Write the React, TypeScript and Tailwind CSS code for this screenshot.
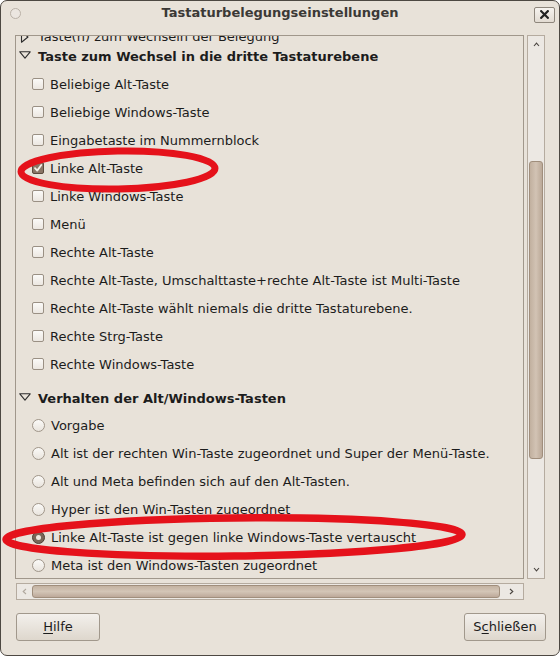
import React from 'react';

type Row =
  | { kind: 'check'; label: string; checked?: boolean }
  | { kind: 'radio'; label: string; checked?: boolean };

const thirdLevel: Row[] = [
  { kind: 'check', label: 'Beliebige Alt-Taste' },
  { kind: 'check', label: 'Beliebige Windows-Taste' },
  { kind: 'check', label: 'Eingabetaste im Nummernblock' },
  { kind: 'check', label: 'Linke Alt-Taste', checked: true },
  { kind: 'check', label: 'Linke Windows-Taste' },
  { kind: 'check', label: 'Menü' },
  { kind: 'check', label: 'Rechte Alt-Taste' },
  { kind: 'check', label: 'Rechte Alt-Taste, Umschalttaste+rechte Alt-Taste ist Multi-Taste' },
  { kind: 'check', label: 'Rechte Alt-Taste wählt niemals die dritte Tastaturebene.' },
  { kind: 'check', label: 'Rechte Strg-Taste' },
  { kind: 'check', label: 'Rechte Windows-Taste' },
];

const altWin: Row[] = [
  { kind: 'radio', label: 'Vorgabe' },
  { kind: 'radio', label: 'Alt ist der rechten Win-Taste zugeordnet und Super der Menü-Taste.' },
  { kind: 'radio', label: 'Alt und Meta befinden sich auf den Alt-Tasten.' },
  { kind: 'radio', label: 'Hyper ist den Win-Tasten zugeordnet' },
  { kind: 'radio', label: 'Linke Alt-Taste ist gegen linke Windows-Taste vertauscht', checked: true },
  { kind: 'radio', label: 'Meta ist den Windows-Tasten zugeordnet' },
];

function Expander({ open }: { open: boolean }) {
  return open ? (
    <svg width="12" height="8" viewBox="0 0 12 8" className="shrink-0 -mt-[3px]">
      <path d="M0.8 0.8 H11.2 L6 7.2 Z" fill="none" stroke="#2e2e2e" strokeWidth="1.1" strokeLinejoin="round" />
    </svg>
  ) : (
    <svg width="12" height="12" viewBox="0 0 12 12" className="shrink-0">
      <path d="M2.5 0.8 V11.2 L9 6 Z" fill="none" stroke="#2e2e2e" strokeWidth="1.1" strokeLinejoin="round" />
    </svg>
  );
}

function CheckBox({ checked }: { checked?: boolean }) {
  return checked ? (
    <span className="w-[12px] h-[12px] rounded-[2px] border border-[#5a4a3e] bg-[#8a7566] flex items-center justify-center shrink-0">
      <svg width="10" height="10" viewBox="0 0 10 10">
        <path d="M2 5.2 L4.2 7.6 L8.3 2" fill="none" stroke="#f4efe9" strokeWidth="1.8" strokeLinecap="round" strokeLinejoin="round" />
      </svg>
    </span>
  ) : (
    <span className="w-[12px] h-[12px] rounded-[2px] border border-[#9a9084] bg-gradient-to-b from-[#fbfaf8] to-[#ece7e1] shrink-0" />
  );
}

function RadioDot({ checked }: { checked?: boolean }) {
  return checked ? (
    <span className="w-[13px] h-[13px] rounded-full border border-[#4e4036] bg-[#7a6658] flex items-center justify-center shrink-0">
      <span className="w-[5px] h-[5px] rounded-full bg-[#efe8e0]" />
    </span>
  ) : (
    <span className="w-[13px] h-[13px] rounded-full border border-[#a0968a] bg-gradient-to-b from-[#fbfaf8] to-[#e9e4dd] shrink-0" />
  );
}

function Item({ row }: { row: Row }) {
  return (
    <div className="h-[28px] flex items-center pl-[16px] gap-[6px] whitespace-nowrap">
      {row.kind === 'check' ? <CheckBox checked={row.checked} /> : <RadioDot checked={row.checked} />}
      <span className="leading-[13px]">{row.label}</span>
    </div>
  );
}

export default function App() {
  return (
    <div
      className="relative w-[560px] h-[656px] bg-[#e8e2d9] border border-[#4d4842] rounded-[7px] flex flex-col overflow-hidden text-[13px] text-[#1c1c1c]"
      style={{ fontFamily: '"DejaVu Sans", Verdana, sans-serif' }}
    >
      {/* title bar */}
      <div className="h-[22px] flex items-center">
        <div className="w-[44px] pl-[9px] pt-[2px]">
          <span className="block w-[11px] h-[11px] rounded-full border border-[#b9b1a7] bg-[#ebe6e0]" />
        </div>
        <div className="flex-1 text-center font-bold text-[#3b3936] leading-[13px] pt-[1px]">
          Tastaturbelegungseinstellungen
        </div>
        <div className="w-[44px] flex justify-end pr-[4px] pt-[5px]">
          <span className="w-[21px] h-[16px] rounded-[2px] border border-[#8e867c] bg-gradient-to-b from-[#f6f3ef] to-[#e2dbd2] flex items-center justify-center">
            <svg width="9" height="9" viewBox="0 0 9 9">
              <path d="M1.2 1.2 L7.8 7.8 M7.8 1.2 L1.2 7.8" stroke="#222" strokeWidth="2.2" strokeLinecap="square" />
            </svg>
          </span>
        </div>
      </div>

      {/* scrolled tree */}
      <div className="mt-[12px] pl-[14px] flex gap-[3px]">
        <div className="w-[509px] h-[544px] border border-[#a0978b] overflow-hidden bg-[#e8e2d9]">
          <div className="-mt-[12px]">
            <div className="h-[25px] flex items-center pl-[3px] gap-[7px] whitespace-nowrap">
              <Expander open={false} />
              <span className="leading-[13px]">Taste(n) zum Wechseln der Belegung</span>
            </div>
            <div className="h-[21px] pb-[7px] flex items-center pl-[3px] gap-[7px] whitespace-nowrap">
              <Expander open />
              <span className="leading-[13px] font-bold">Taste zum Wechsel in die dritte Tastaturebene</span>
            </div>
            {thirdLevel.map((r) => (
              <Item key={r.label} row={r} />
            ))}
            <div className="h-[33px] pt-[8px] flex items-center pl-[3px] gap-[7px] whitespace-nowrap">
              <Expander open />
              <span className="leading-[13px] font-bold">Verhalten der Alt/Windows-Tasten</span>
            </div>
            {altWin.map((r) => (
              <Item key={r.label} row={r} />
            ))}
          </div>
        </div>

        {/* vertical scrollbar */}
        <div className="w-[18px] h-[544px] border border-[#b5ab9f] bg-[#ece8e3] flex flex-col items-center">
          <div className="h-[16px] flex items-center justify-center">
            <svg width="7" height="5" viewBox="0 0 7 5">
              <path d="M1 4 L3.5 1.2 L6 4" fill="none" stroke="#4a4540" strokeWidth="1.1" />
            </svg>
          </div>
          <div className="flex-1 w-full px-[1px]">
            <div className="mt-[109px] h-[298px] rounded-[3px] border border-[#a08e7c] bg-gradient-to-r from-[#c1b09f] via-[#d2c3b4] to-[#bba998]" />
          </div>
          <div className="h-[18px] flex items-center justify-center">
            <svg width="7" height="5" viewBox="0 0 7 5">
              <path d="M1 1 L3.5 3.8 L6 1" fill="none" stroke="#4a4540" strokeWidth="1.1" />
            </svg>
          </div>
        </div>
      </div>

      {/* horizontal scrollbar */}
      <div className="mt-[4px] ml-[15px] w-[508px] h-[17px] border border-[#b5ab9f] bg-[#ece8e3] flex items-center">
        <div className="w-[15px] flex justify-center">
          <svg width="5" height="7" viewBox="0 0 5 7">
            <path d="M4 1 L1.2 3.5 L4 6" fill="none" stroke="#b0a89e" strokeWidth="1.1" />
          </svg>
        </div>
        <div className="flex-1 h-[13px] rounded-[3px] border border-[#a08e7c] bg-gradient-to-b from-[#c4b3a2] via-[#d3c5b6] to-[#bda99a]" />
        <div className="w-[23px] flex justify-center">
          <svg width="5" height="7" viewBox="0 0 5 7">
            <path d="M1 1 L3.8 3.5 L1 6" fill="none" stroke="#4a4540" strokeWidth="1.1" />
          </svg>
        </div>
      </div>

      {/* buttons */}
      <div className="mt-[13px] pl-[15px] pr-[13px] flex justify-between">
        <button
          type="button"
          className="w-[84px] h-[28px] rounded-[3px] border border-[#a1988c] bg-gradient-to-b from-[#f3f0ec] to-[#ded7cd] text-[13px] text-[#1c1c1c]"
        >
          <span className="underline underline-offset-2">H</span>ilfe
        </button>
        <button
          type="button"
          className="w-[82px] h-[28px] rounded-[3px] border border-[#a1988c] bg-gradient-to-b from-[#f3f0ec] to-[#ded7cd] text-[13px] text-[#1c1c1c]"
        >
          S<span className="underline underline-offset-2">c</span>hließen
        </button>
      </div>

      {/* red annotation ellipses */}
      <svg className="absolute left-0 top-0 pointer-events-none" width="560" height="656" viewBox="0 0 560 656">
        <ellipse cx="117" cy="169" rx="97" ry="19" fill="none" stroke="#e5121b" strokeWidth="7" transform="rotate(-1 117 169)" />
        <ellipse cx="233" cy="536" rx="228" ry="19" fill="none" stroke="#e5121b" strokeWidth="7.5" transform="rotate(-0.6 233 536)" />
      </svg>
    </div>
  );
}
